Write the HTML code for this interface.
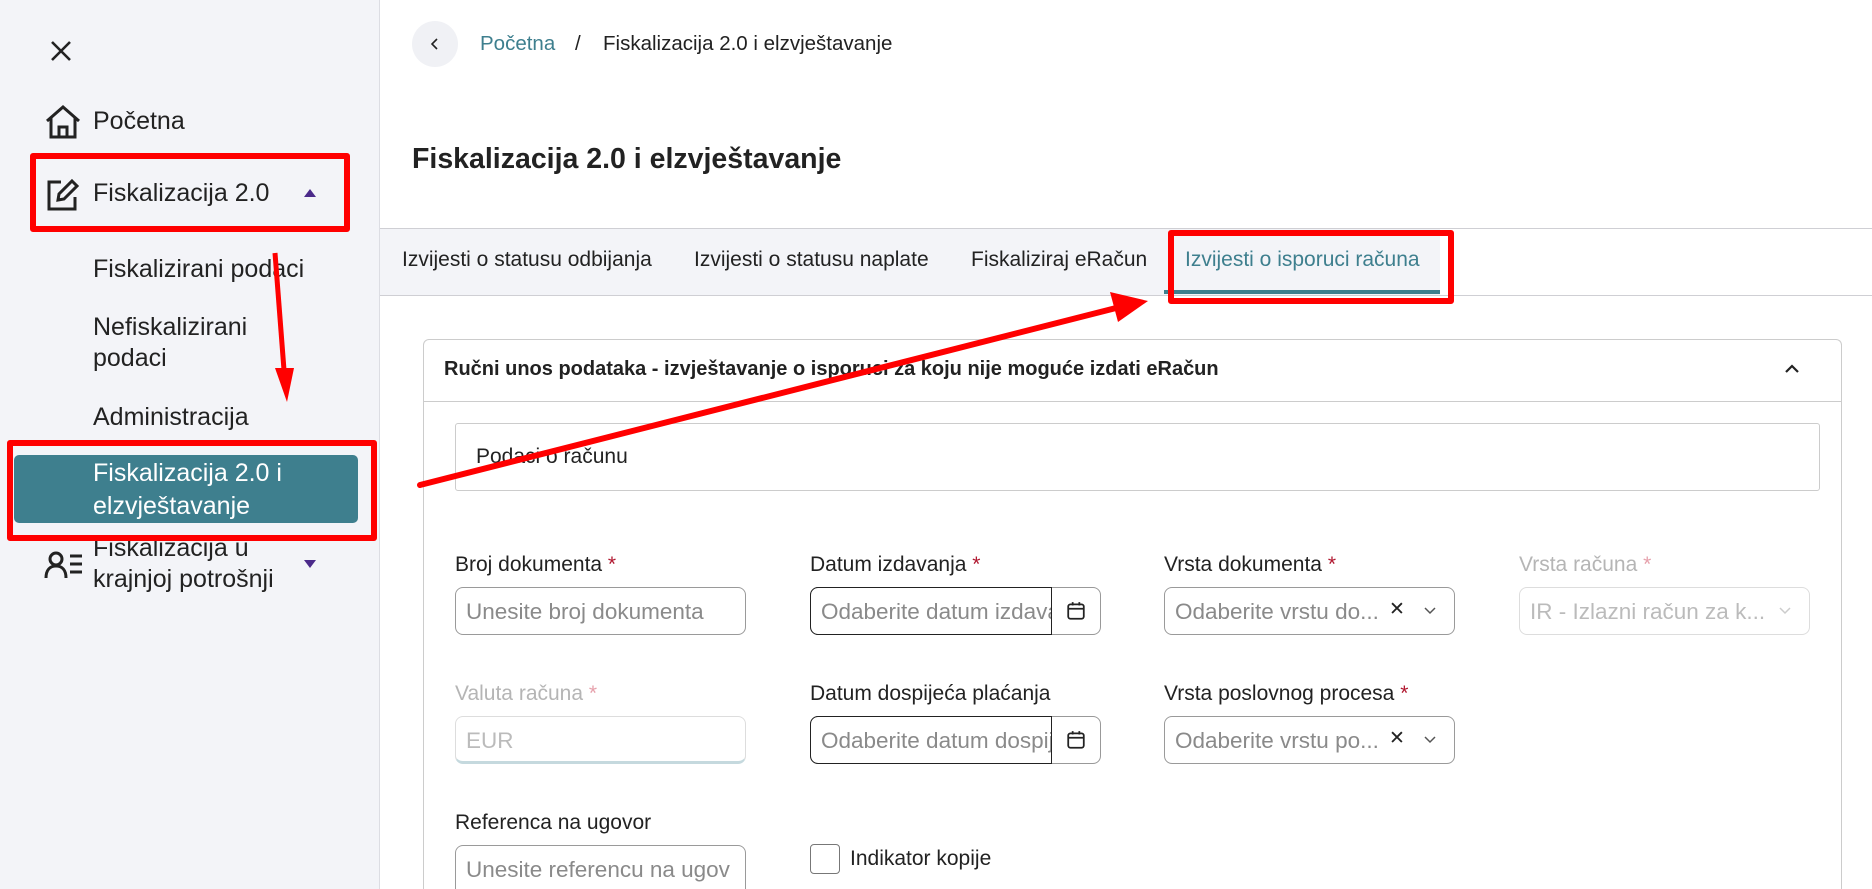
<!DOCTYPE html>
<html><head><meta charset="utf-8"><style>
*{box-sizing:border-box;margin:0;padding:0}
html,body{width:1872px;height:889px;overflow:hidden}
body{background:#fff;font-family:"Liberation Sans",Arial,sans-serif;color:#222;position:relative}
.a{position:absolute;white-space:nowrap}
.side{position:absolute;left:0;top:0;width:380px;height:889px;background:#f3f4f8;border-right:1px solid #dcdde3}
.nav{font-size:25px;color:#222}
.lbl{font-size:21px;color:#222}
.lbl b{color:#b0172f;font-weight:normal}
.dis{color:#b5b5b5}.dis b{color:#e6a0ab}
.inp{position:absolute;height:48px;border:1px solid #9a9a9a;border-radius:8px;font-size:22.5px;color:#8a8a8a;padding:11px 10px;white-space:nowrap;overflow:hidden}
.red{position:absolute;border:6px solid #f00;border-radius:3px}
</style></head><body>
<div class="side"></div>
<svg class="a" style="left:49px;top:39px" width="24" height="24" viewBox="0 0 24 24"><path d="M3 3L21 21M21 3L3 21" stroke="#222" stroke-width="2.6"/></svg>
<svg class="a" style="left:44px;top:104px" width="38" height="36" viewBox="0 0 38 36"><path d="M3 17L19 3L35 17M7 14V33H31V14M15 33V23H23V33" fill="none" stroke="#222" stroke-width="3"/></svg>
<div class="a nav" style="left:93px;top:107px">Početna</div>
<svg class="a" style="left:46px;top:178px" width="34" height="34" viewBox="0 0 34 34"><path d="M15 4H3V31H29V19" fill="none" stroke="#222" stroke-width="3"/><path d="M26 3L31 8L18 21L12 22L13 16Z" fill="none" stroke="#222" stroke-width="3"/></svg>
<div class="a nav" style="left:93px;top:179px">Fiskalizacija 2.0</div>
<svg class="a" style="left:304px;top:189px" width="12" height="8"><path d="M0 8L6 0L12 8Z" fill="#4b2a8a"/></svg>
<div class="a nav" style="left:93px;top:255px">Fiskalizirani podaci</div>
<div class="a nav" style="left:93px;top:312px;line-height:31px;white-space:normal">Nefiskalizirani<br>podaci</div>
<div class="a nav" style="left:93px;top:403px">Administracija</div>
<div class="a" style="left:14px;top:455px;width:344px;height:68px;background:#3e7f8e;border-radius:5px"></div>
<div class="a nav" style="left:93px;top:457px;line-height:33px;color:#fff">Fiskalizacija 2.0 i<br>elzvještavanje</div>
<div class="a nav" style="left:93px;top:533px;line-height:31px">Fiskalizacija u<br>krajnjoj potrošnji</div>
<svg class="a" style="left:44px;top:550px" width="40" height="30" viewBox="0 0 40 30"><circle cx="12" cy="9" r="6" fill="none" stroke="#222" stroke-width="3"/><path d="M2 28C2 20 6 16 12 16C18 16 22 20 22 28" fill="none" stroke="#222" stroke-width="3"/><path d="M26 6H38M26 14H38M26 22H38" stroke="#222" stroke-width="3"/></svg>
<svg class="a" style="left:304px;top:560px" width="12" height="8"><path d="M0 0L6 8L12 0Z" fill="#4b2a8a"/></svg>
<div class="red" style="left:30px;top:153px;width:320px;height:79px"></div>
<div class="red" style="left:7px;top:440px;width:370px;height:101px"></div>

<div class="a" style="left:412px;top:21px;width:46px;height:46px;border-radius:50%;background:#f0f1f5"></div>
<svg class="a" style="left:431px;top:38px" width="8" height="12"><path d="M6 1L1 6L6 11" fill="none" stroke="#222" stroke-width="1.6"/></svg>
<div class="a" style="left:480px;top:32px;font-size:20.5px;color:#3e7f8e">Početna</div>
<div class="a" style="left:575px;top:32px;font-size:20.5px">/</div>
<div class="a" style="left:603px;top:32px;font-size:20.5px">Fiskalizacija 2.0 i elzvještavanje</div>
<div class="a" style="left:412px;top:143px;font-size:28.5px;font-weight:bold">Fiskalizacija 2.0 i elzvještavanje</div>

<div class="a" style="left:380px;top:228px;width:1060px;height:67px;background:#f3f4f8"></div>
<div class="a" style="left:380px;top:228px;width:1492px;height:1px;background:#cfcfd4"></div>
<div class="a" style="left:380px;top:295px;width:1492px;height:1px;background:#cfcfd4"></div>
<div class="a" style="left:402px;top:248px;font-size:21px">Izvijesti o statusu odbijanja</div>
<div class="a" style="left:694px;top:248px;font-size:21px">Izvijesti o statusu naplate</div>
<div class="a" style="left:971px;top:248px;font-size:21px">Fiskaliziraj eRačun</div>
<div class="a" style="left:1185px;top:248px;font-size:21px;color:#3e7f8e">Izvijesti o isporuci računa</div>
<div class="a" style="left:1164px;top:290px;width:276px;height:4px;background:#3e7f8e"></div>
<div class="red" style="left:1168px;top:230px;width:286px;height:74px"></div>

<div class="a" style="left:423px;top:339px;width:1419px;height:550px;border:1px solid #ccc;border-bottom:none;border-radius:6px 6px 0 0"></div>
<div class="a" style="left:423px;top:401px;width:1419px;height:1px;background:#ccc"></div>
<div class="a" style="left:444px;top:358px;font-size:20px;font-weight:bold">Ručni unos podataka - izvještavanje o isporuci za koju nije moguće izdati eRačun</div>
<svg class="a" style="left:1785px;top:364px" width="14" height="10"><path d="M1 8L7 2L13 8" fill="none" stroke="#222" stroke-width="2.2"/></svg>
<div class="a" style="left:455px;top:423px;width:1365px;height:68px;border:1px solid #ccc;border-radius:3px"></div>
<div class="a" style="left:476px;top:445px;font-size:21px">Podaci o računu</div>

<div class="a lbl" style="left:455px;top:553px">Broj dokumenta <b>*</b></div>
<div class="a lbl" style="left:810px;top:553px">Datum izdavanja <b>*</b></div>
<div class="a lbl" style="left:1164px;top:553px">Vrsta dokumenta <b>*</b></div>
<div class="a lbl dis" style="left:1519px;top:553px">Vrsta računa <b>*</b></div>
<div class="inp" style="left:455px;top:587px;width:291px">Unesite broj dokumenta</div>
<div class="inp" style="left:810px;top:587px;width:291px;border-color:#999"></div>
<div class="inp" style="left:810px;top:587px;width:242px;border:1.5px solid #222;border-radius:8px 0 0 8px">Odaberite datum izdava</div>
<svg class="a" style="left:1066px;top:601px" width="20" height="20" viewBox="0 0 18 18"><rect x="2" y="3" width="14" height="13" rx="2" fill="none" stroke="#222" stroke-width="1.6"/><path d="M2 7H16M6 1V4M12 1V4" stroke="#222" stroke-width="1.6"/></svg>
<div class="inp" style="left:1164px;top:587px;width:291px">Odaberite vrstu do...</div>
<div class="a" style="left:1389px;top:598px;font-size:19px">✕</div>
<svg class="a" style="left:1424px;top:607px" width="12" height="8"><path d="M1 1L6 6L11 1" fill="none" stroke="#555" stroke-width="1.5"/></svg>
<div class="inp" style="left:1519px;top:587px;width:291px;border-color:#ddd;color:#bbb">IR - Izlazni račun za k...</div>
<svg class="a" style="left:1779px;top:607px" width="12" height="8"><path d="M1 1L6 6L11 1" fill="none" stroke="#ccc" stroke-width="1.5"/></svg>

<div class="a lbl dis" style="left:455px;top:682px">Valuta računa <b>*</b></div>
<div class="a lbl" style="left:810px;top:682px">Datum dospijeća plaćanja</div>
<div class="a lbl" style="left:1164px;top:682px">Vrsta poslovnog procesa <b>*</b></div>
<div class="inp" style="left:455px;top:716px;width:291px;border-color:#ddd;border-bottom:3px solid #c5d9de;color:#bbb">EUR</div>
<div class="inp" style="left:810px;top:716px;width:291px;border-color:#999"></div>
<div class="inp" style="left:810px;top:716px;width:242px;border:1.5px solid #222;border-radius:8px 0 0 8px">Odaberite datum dospij</div>
<svg class="a" style="left:1066px;top:730px" width="20" height="20" viewBox="0 0 18 18"><rect x="2" y="3" width="14" height="13" rx="2" fill="none" stroke="#222" stroke-width="1.6"/><path d="M2 7H16M6 1V4M12 1V4" stroke="#222" stroke-width="1.6"/></svg>
<div class="inp" style="left:1164px;top:716px;width:291px">Odaberite vrstu po...</div>
<div class="a" style="left:1389px;top:727px;font-size:19px">✕</div>
<svg class="a" style="left:1424px;top:736px" width="12" height="8"><path d="M1 1L6 6L11 1" fill="none" stroke="#555" stroke-width="1.5"/></svg>

<div class="a lbl" style="left:455px;top:811px">Referenca na ugovor</div>
<div class="inp" style="left:455px;top:845px;width:291px;height:44px;border-bottom:none;border-radius:8px 8px 0 0">Unesite referencu na ugov</div>
<div class="a" style="left:810px;top:844px;width:30px;height:30px;border:1.5px solid #777;border-radius:4px"></div>
<div class="a lbl" style="left:850px;top:847px">Indikator kopije</div>

<svg class="a" style="left:0;top:0" width="1872" height="889">
<line x1="275" y1="253" x2="284" y2="370" stroke="#f00" stroke-width="5"/>
<path d="M275 368L294 368L287 402Z" fill="#f00"/>
<line x1="420" y1="485" x2="1120" y2="307" stroke="#f00" stroke-width="6" stroke-linecap="round"/>
<path d="M1110 292L1148 301L1118 322Z" fill="#f00"/>
</svg>
</body></html>
